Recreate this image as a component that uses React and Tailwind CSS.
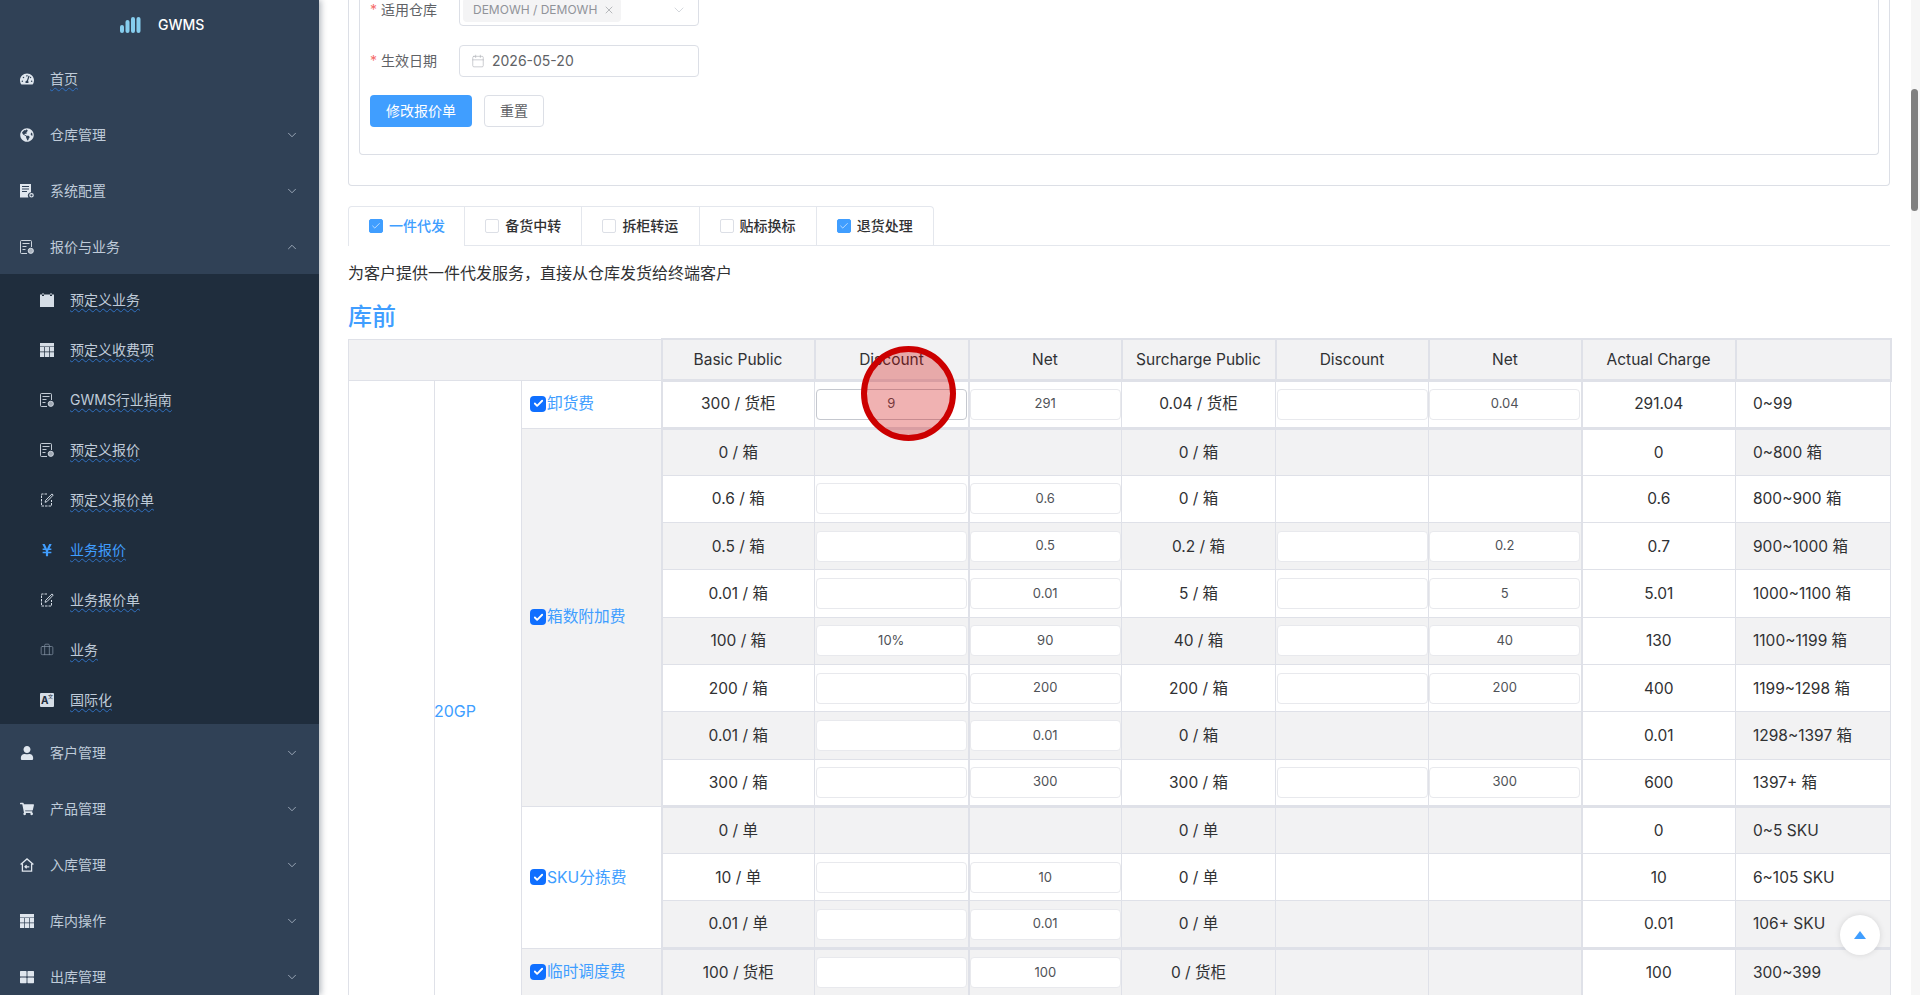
import { Briefcase, Calendar, ChevronDown, ChevronUp, Check, X } from 'lucide-react'
import {
  FaGlobeAmericas,
  FaShoppingCart,
  FaTachometerAlt,
  FaThLarge,
  FaUser,
  FaYenSign,
} from 'react-icons/fa'

const FONT = { fontFamily: 'Inter, "Noto Sans CJK SC", sans-serif' }

function Logo() {
  return (
    <svg width="21" height="16" viewBox="0 0 21 16" fill="#86cdee">
      <rect x="0" y="8" width="4" height="8" rx="2" />
      <rect x="5.5" y="3" width="4" height="13" rx="2" />
      <rect x="11" y="0" width="4" height="16" rx="2" />
      <rect x="16.5" y="0" width="4" height="16" rx="2" />
    </svg>
  )
}

function DocGear({ size = 14 }) {
  return (
    <svg width={size} height={size} viewBox="0 0 14 14" fill="currentColor">
      <path d="M0 0h11v8.2a3.4 3.4 0 0 0-2.6 5.3H0z" />
      <path d="M2 2.5h7M2 5h7M2 7.5h5" stroke="#304156" strokeWidth="1" />
      <circle cx="11.5" cy="11.3" r="1.7" fill="none" stroke="currentColor" strokeWidth="1.2" />
    </svg>
  )
}

function DocQuote({ size = 14 }) {
  return (
    <svg width={size} height={size} viewBox="0 0 14 14" fill="none" stroke="currentColor" strokeWidth="0.9">
      <path d="M7 13.5H1.5a1 1 0 0 1-1-1v-11a1 1 0 0 1 1-1h9a1 1 0 0 1 1 1V7" />
      <path d="M2.5 3.5h7M2.5 6.5h4M2.5 9.5h3" />
      <circle cx="10.8" cy="10.8" r="2.6" fill="currentColor" fillOpacity="0.7" />
    </svg>
  )
}

function CalendarFill() {
  return (
    <svg width="14" height="14" viewBox="0 0 14 14" fill="currentColor">
      <path d="M0 1.5h2v1.5h2V1.5h6V3h2V1.5h2V14H0z" />
      <path d="M2.5 0h1v2h-1zM10.5 0h1v2h-1z" />
    </svg>
  )
}

function TableFill() {
  return (
    <svg width="14" height="14" viewBox="0 0 14 14" fill="currentColor">
      <path d="M0 0h14v3.5H0z" />
      <path d="M0 4h4.2v4.5H0zM4.9 4h4.2v4.5H4.9zM9.8 4H14v4.5H9.8zM0 9.2h4.2V14H0zM4.9 9.2h4.2V14H4.9zM9.8 9.2H14V14H9.8z" />
    </svg>
  )
}

function EditDoc() {
  return (
    <svg width="14" height="14" viewBox="0 0 14 14" fill="none" stroke="currentColor" strokeWidth="1">
      <path d="M7 1H1.5v12h10V7" strokeDasharray="2.5 1" />
      <path d="M12 .9l1.2 1.2-6.3 6.6-1.8.6.5-1.9z" />
    </svg>
  )
}

function HomeIn() {
  return (
    <svg width="14" height="14" viewBox="0 0 14 14" fill="none" stroke="currentColor" strokeWidth="1.3">
      <path d="M.6 6.6L7 .9l6.4 5.7M2.4 5.8v7.4h9.2V5.8" />
      <path d="M9.3 8.8H5M6.6 7.2L5 8.8l1.6 1.6" />
    </svg>
  )
}

function Translate() {
  return (
    <div className="relative flex h-[14px] w-[14px] items-start rounded-[1px] bg-[#d5dde6] pl-[1px] pt-[2px] text-[10px] font-bold leading-[10px] text-[#1f2d3d]">
      A
      <span className="absolute right-[1px] top-[1px] text-[5px] font-normal leading-[5px]">文</span>
    </div>
  )
}

const wavy = 'underline decoration-wavy decoration-[#2f70c0] decoration-1 underline-offset-[3px]'

const topBefore = [
  { label: '首页', icon: <FaTachometerAlt size={14} />, wavy: true, plain: true },
  { label: '仓库管理', icon: <FaGlobeAmericas size={14} /> },
  { label: '系统配置', icon: <DocGear /> },
]

const subMenu = [
  { label: '预定义业务', icon: <CalendarFill /> },
  { label: '预定义收费项', icon: <TableFill /> },
  { label: 'GWMS行业指南', icon: <DocQuote /> },
  { label: '预定义报价', icon: <DocQuote /> },
  { label: '预定义报价单', icon: <EditDoc /> },
  { label: '业务报价', icon: <FaYenSign size={14} />, active: true },
  { label: '业务报价单', icon: <EditDoc /> },
  { label: '业务', icon: <Briefcase size={14} strokeWidth={1.25} className="text-[#8494a6]" /> },
  { label: '国际化', icon: <Translate /> },
]

const topAfter = [
  { label: '客户管理', icon: <FaUser size={14} /> },
  { label: '产品管理', icon: <FaShoppingCart size={14} /> },
  { label: '入库管理', icon: <HomeIn /> },
  { label: '库内操作', icon: <TableFill /> },
  { label: '出库管理', icon: <FaThLarge size={14} /> },
]

function MenuItem({ item, open }) {
  return (
    <div className="flex h-[56px] shrink-0 items-center px-5 pt-[2px] text-sm text-[#bfcbd9]">
      <span className="flex w-[14px] justify-center text-[#dfe6ee]">{item.icon}</span>
      <span className="ml-4 flex-1">
        <span className={item.wavy ? wavy : ''}>{item.label}</span>
      </span>
      {!item.plain &&
        (open ? (
          <ChevronUp size={14} strokeWidth={1.25} />
        ) : (
          <ChevronDown size={14} strokeWidth={1.25} />
        ))}
    </div>
  )
}

function Sidebar() {
  return (
    <aside className="relative z-10 flex h-[995px] w-[319px] shrink-0 flex-col overflow-hidden bg-[#304156] shadow-[2px_0_6px_rgba(0,21,41,0.3)]">
      <div className="flex h-[50px] shrink-0 items-start pl-[120px] pt-[17px]">
        <Logo />
        <span className="ml-[17px] mt-[1px] text-sm font-medium leading-[14px] text-white">GWMS</span>
      </div>
      {topBefore.map((item) => (
        <MenuItem key={item.label} item={item} />
      ))}
      <MenuItem item={{ label: '报价与业务', icon: <DocQuote /> }} open />
      <div className="shrink-0 bg-[#1f2d3d]">
        {subMenu.map((item) => (
          <div
            key={item.label}
            className={`flex h-[50px] items-center pl-10 pt-[2px] text-sm ${item.active ? 'text-[#409eff]' : 'text-[#bfcbd9]'}`}
          >
            <span className={`flex w-[14px] justify-center ${item.active ? '' : 'text-[#d5dde6]'}`}>{item.icon}</span>
            <span className={`ml-4 ${wavy}`}>{item.label}</span>
          </div>
        ))}
      </div>
      {topAfter.map((item) => (
        <MenuItem key={item.label} item={item} />
      ))}
    </aside>
  )
}

function PriceForm() {
  return (
    <div className="rounded-b border-x border-b border-[#dcdfe6] px-[10px] pb-[30px]">
      <div className="rounded-b border-x border-b border-[#dcdfe6] pb-[27px] pl-[10px] text-sm text-[#606266]">
        <div className="-mt-[6px] flex items-center">
          <label className="w-[89px]">
            <span className="mr-1 text-[#f56c6c]">*</span>适用仓库
          </label>
          <div className="flex h-[32px] w-[240px] items-center justify-between rounded border border-[#dcdfe6] pl-[3px] pr-[11px]">
            <span className="flex h-[24px] w-[158px] items-center justify-between rounded bg-[#f4f4f5] pl-[10px] pr-[6px] text-xs text-[#909399]">
              DEMOWH / DEMOWH
              <X size={12} strokeWidth={1.25} />
            </span>
            <ChevronDown size={16} strokeWidth={1} className="text-[#c0c4cc]" />
          </div>
        </div>
        <div className="mt-[19px] flex items-center">
          <label className="w-[89px]">
            <span className="mr-1 text-[#f56c6c]">*</span>生效日期
          </label>
          <div className="flex h-[32px] w-[240px] items-center rounded border border-[#dcdfe6] pl-[11px]">
            <Calendar size={14} strokeWidth={1} className="text-[#a8abb2]" />
            <span className="ml-[7px]">2026-05-20</span>
          </div>
        </div>
        <div className="mt-[18px] flex gap-3">
          <button className="h-[32px] w-[102px] rounded bg-[#409eff] text-sm text-white">修改报价单</button>
          <button className="h-[32px] w-[60px] rounded border border-[#dcdfe6] bg-white text-sm text-[#606266]">重置</button>
        </div>
      </div>
    </div>
  )
}

function TabCheck({ checked }) {
  return (
    <span
      className={`flex h-[14px] w-[14px] items-center justify-center rounded-[2px] border ${checked ? 'border-[#409eff] bg-[#409eff]' : 'border-[#dcdfe6] bg-white'}`}
    >
      {checked && <Check size={10} strokeWidth={1.5} className="text-white" />}
    </span>
  )
}

const tabs = [
  { label: '一件代发', checked: true, active: true },
  { label: '备货中转' },
  { label: '拆柜转运' },
  { label: '贴标换标' },
  { label: '退货处理', checked: true },
]

function Tabs() {
  return (
    <div className="mt-[20px] flex h-[40px] items-start border-b border-[#e4e7ed]">
      {tabs.map((tab, i) => (
        <div
          key={tab.label}
          className={`flex w-[117.2px] items-center gap-[6px] border-t border-r border-[#e4e7ed] pl-[20px] text-sm font-medium ${i === 0 ? 'rounded-tl border-l' : ''} ${i === 4 ? 'rounded-tr' : ''} ${tab.active ? 'h-[40px] bg-white pb-px text-[#409eff]' : 'h-[39px] text-[#303133]'}`}
        >
          <TabCheck checked={tab.checked} />
          {tab.label}
        </div>
      ))}
    </div>
  )
}

// - = 该格没有输入框
const rows = [
  { name: '卸货费', span: 1, first: true, gray: false, cells: ['300 / 货柜', '9', '291', '0.04 / 货柜', '', '0.04', '291.04', '0~99'] },
  { name: '箱数附加费', span: 8, first: true, gray: true, nameGray: true, cells: ['0 / 箱', '-', '-', '0 / 箱', '-', '-', '0', '0~800 箱'] },
  { gray: false, cells: ['0.6 / 箱', '', '0.6', '0 / 箱', '-', '-', '0.6', '800~900 箱'] },
  { gray: true, cells: ['0.5 / 箱', '', '0.5', '0.2 / 箱', '', '0.2', '0.7', '900~1000 箱'] },
  { gray: false, cells: ['0.01 / 箱', '', '0.01', '5 / 箱', '', '5', '5.01', '1000~1100 箱'] },
  { gray: true, cells: ['100 / 箱', '10%', '90', '40 / 箱', '', '40', '130', '1100~1199 箱'] },
  { gray: false, cells: ['200 / 箱', '', '200', '200 / 箱', '', '200', '400', '1199~1298 箱'] },
  { gray: true, cells: ['0.01 / 箱', '', '0.01', '0 / 箱', '-', '-', '0.01', '1298~1397 箱'] },
  { gray: false, cells: ['300 / 箱', '', '300', '300 / 箱', '', '300', '600', '1397+ 箱'] },
  { name: 'SKU分拣费', span: 3, first: true, gray: true, cells: ['0 / 单', '-', '-', '0 / 单', '-', '-', '0', '0~5 SKU'] },
  { gray: false, cells: ['10 / 单', '', '10', '0 / 单', '-', '-', '10', '6~105 SKU'] },
  { gray: true, cells: ['0.01 / 单', '', '0.01', '0 / 单', '-', '-', '0.01', '106+ SKU'] },
  { name: '临时调度费', span: 1, first: true, gray: true, nameGray: true, cells: ['100 / 货柜', '', '100', '0 / 货柜', '-', '-', '100', '300~399'] },
]

const headers = ['Basic Public', 'Discount', 'Net', 'Surcharge Public', 'Discount', 'Net', 'Actual Charge', '']

function NativeCheck() {
  return (
    <span className="mr-[1px] flex h-4 w-4 shrink-0 items-center justify-center rounded-[4px] bg-[#0f6fff]">
      <Check size={11} strokeWidth={4} className="text-white" />
    </span>
  )
}

function PriceCell({ value, bordered }) {
  if (value === '-') return null
  return (
    <div
      className={`mx-auto flex h-[31px] w-[151px] items-center justify-center rounded-[4px] border bg-white text-[13px] text-[#4f5257] ${bordered ? 'border-[#c5c8cf]' : 'border-[#e8e9ed]'}`}
    >
      {value}
    </div>
  )
}

function Row({ row, index }) {
  const topBorder = row.first ? 'border-t-[3px]' : 'border-t'
  const stripe = row.gray ? 'bg-[#f2f2f3]' : 'bg-white'
  return (
    <tr className={index === 0 ? 'h-[48px]' : 'h-[47.3px]'}>
      {index === 0 && <td rowSpan={14} className="border border-[#dfe1e8] bg-white" />}
      {index === 0 && (
        <td rowSpan={14} className="border border-[#dfe1e8] bg-white align-middle text-base text-[#409eff]">
          <span className="-ml-px">20GP</span>
        </td>
      )}
      {row.name && (
        <td
          rowSpan={row.span}
          className={`border border-[#dfe1e8] pl-2 ${row.nameGray ? 'bg-[#f2f2f3]' : 'bg-white'}`}
        >
          <span className="flex items-center text-[15.7px] text-[#409eff]">
            <NativeCheck />
            {row.name}
          </span>
        </td>
      )}
      {row.cells.map((value, i) => {
        const isInput = [1, 2, 4, 5].includes(i)
        const thickLeft = i === 0 || i === 2 || i === 6 ? 'border-l-2' : 'border-l'
        const bg = i === 6 ? 'bg-white' : stripe
        return (
          <td
            key={i}
            className={`${topBorder} ${thickLeft} border-r border-b border-[#dfe1e8] text-[15.5px] text-[#303133] ${bg} ${i === 7 ? 'pl-[17px] text-left' : 'text-center'}`}
          >
            {isInput ? <PriceCell value={value} bordered={index === 0 && i === 1} /> : value}
          </td>
        )
      })}
    </tr>
  )
}

function PriceTable() {
  return (
    <table className="mt-[4px] w-[1542px] table-fixed border-collapse">
      <colgroup>
        <col className="w-[86px]" />
        <col className="w-[87px]" />
        <col className="w-[140px]" />
        <col className="w-[153px]" />
        <col className="w-[154px]" />
        <col className="w-[153px]" />
        <col className="w-[154px]" />
        <col className="w-[153px]" />
        <col className="w-[153px]" />
        <col className="w-[154px]" />
        <col className="w-[155px]" />
      </colgroup>
      <thead>
        <tr className="h-[41px] bg-[#f2f2f3] text-[15.5px] font-normal text-[#303133]">
          <th colSpan={3} className="border border-[#dfe1e8] font-normal" />
          {headers.map((h, i) => (
            <th key={i} className="border-2 border-[#dfe1e8] font-normal">
              {h}
            </th>
          ))}
        </tr>
      </thead>
      <tbody>
        {rows.map((row, i) => (
          <Row key={i} row={row} index={i} />
        ))}
        <tr className="h-[47px]">
          <td colSpan={9} className="border border-[#dfe1e8]" />
        </tr>
      </tbody>
    </table>
  )
}

export default function App() {
  return (
    <div className="relative flex h-[995px] w-[1920px] overflow-hidden bg-white" style={FONT}>
      <Sidebar />
      <main className="h-[995px] flex-1 overflow-hidden pl-[29px] pr-[21px]">
        <PriceForm />
        <Tabs />
        <p className="mt-[15px] text-base leading-6 text-[#303133]">为客户提供一件代发服务，直接从仓库发货给终端客户</p>
        <h2 className="mt-[15px] text-2xl font-medium leading-[34px] text-[#409eff]">库前</h2>
        <PriceTable />
      </main>
      <div className="h-[995px] w-[9px] shrink-0 bg-[#f6f6f6]">
        <div className="mt-[89px] h-[122px] w-[7px] rounded bg-[#808080]" />
      </div>

      <div className="absolute left-[861px] top-[346px] h-[95px] w-[95px] rounded-full border-[6px] border-[#cc0000] bg-[rgba(204,0,0,0.3)]" />
      <div className="absolute left-[1840px] top-[915px] flex h-10 w-10 items-center justify-center rounded-full bg-white shadow-[0_0_6px_rgba(0,0,0,0.12)]">
        <svg width="12" height="8" viewBox="0 0 12 8" fill="#409eff">
          <path d="M6 0l6 8H0z" />
        </svg>
      </div>
    </div>
  )
}
